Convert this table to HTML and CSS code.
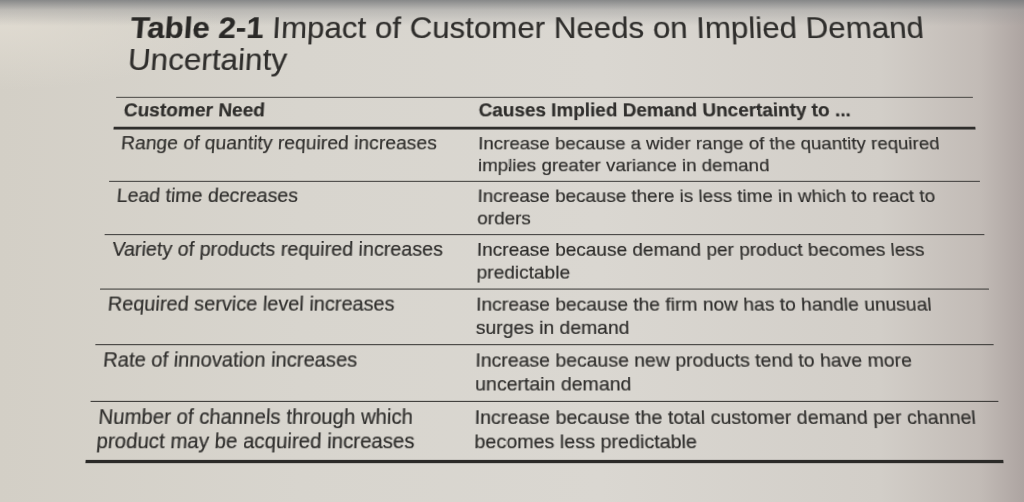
FILE: index.html
```html
<!DOCTYPE html>
<html lang="en">
<head>
<meta charset="utf-8">
<title>Table 2-1 Impact of Customer Needs on Implied Demand Uncertainty</title>
<link rel="stylesheet" href="styles.css">
</head>
<body>
<div class="sheet">
  <h1 class="title"><b>Table 2-1</b> Impact of Customer Needs on Implied Demand<br>Uncertainty</h1>
  <div class="table">
    <div class="row head">
      <div class="c1">Customer Need</div>
      <div class="c2">Causes Implied Demand Uncertainty to ...</div>
    </div>
    <div class="row">
      <div class="c1">Range of quantity required increases</div>
      <div class="c2">Increase because a wider range of the quantity required<br>implies greater variance in demand</div>
    </div>
    <div class="row">
      <div class="c1">Lead time decreases</div>
      <div class="c2">Increase because there is less time in which to react to<br>orders</div>
    </div>
    <div class="row">
      <div class="c1">Variety of products required increases</div>
      <div class="c2">Increase because demand per product becomes less<br>predictable</div>
    </div>
    <div class="row">
      <div class="c1">Required service level increases</div>
      <div class="c2">Increase because the firm now has to handle unusual<br>surges in demand</div>
    </div>
    <div class="row">
      <div class="c1">Rate of innovation increases</div>
      <div class="c2">Increase because new products tend to have more<br>uncertain demand</div>
    </div>
    <div class="row last">
      <div class="c1">Number of channels through which<br>product may be acquired increases</div>
      <div class="c2">Increase because the total customer demand per channel<br>becomes less predictable</div>
    </div>
  </div>
</div>
</body>
</html>
```
FILE: styles.css
```css
html, body {
  margin: 0;
  padding: 0;
  width: 1024px;
  height: 502px;
  overflow: hidden;
}

body {
  font-family: "Liberation Sans", Arial, sans-serif;
  color: #2f2e2c;
  background:
    linear-gradient(to bottom, rgba(120, 122, 124, 0.85) 0px, rgba(150, 150, 150, 0.45) 10px, rgba(200, 200, 198, 0) 26px),
    radial-gradient(ellipse 220px 70px at 0px 20px, rgba(225, 220, 210, 0.9), rgba(225, 220, 210, 0)),
    linear-gradient(to right, #d3cfc6 0px, #d8d5ce 300px, #dad7d1 600px, #d2cec8 880px, #c2bbb6 980px, #ada4a1 1024px);
}

.sheet {
  width: 1024px;
  height: 502px;
  box-sizing: border-box;
  padding-left: 104px;
  transform: perspective(1000px) rotateX(10.8deg);
  transform-origin: 545px 245px;
  -webkit-text-stroke: 0.2px #2f2e2c;
}

.title {
  margin: -3px 0 23px 9px;
  font-size: 32.6px;
  line-height: 35px;
  font-weight: normal;
  color: #2f2e2c;
}

.title b {
  font-weight: bold;
  color: #2a2927;
}

.table {
  width: 881px;
  border-top: 1.5px solid #3c3b39;
  border-bottom: 3px solid #2b2a28;
}

.row {
  display: grid;
  grid-template-columns: 373px 1fr;
  font-size: 19px;
  line-height: 23px;
  padding: 3px 0 5px;
  border-bottom: 1.5px solid #353432;
}

.row.head {
  font-weight: bold;
  font-size: 19.4px;
  padding: 2px 0 6px;
  border-bottom: 3px solid #2f2e2c;
}

.row.last {
  border-bottom: none;
  padding-bottom: 6px;
}

.c1 {
  padding-left: 9px;
  font-size: 19.7px;
}

.row.head .c1 {
  font-size: 19.6px;
}
```
